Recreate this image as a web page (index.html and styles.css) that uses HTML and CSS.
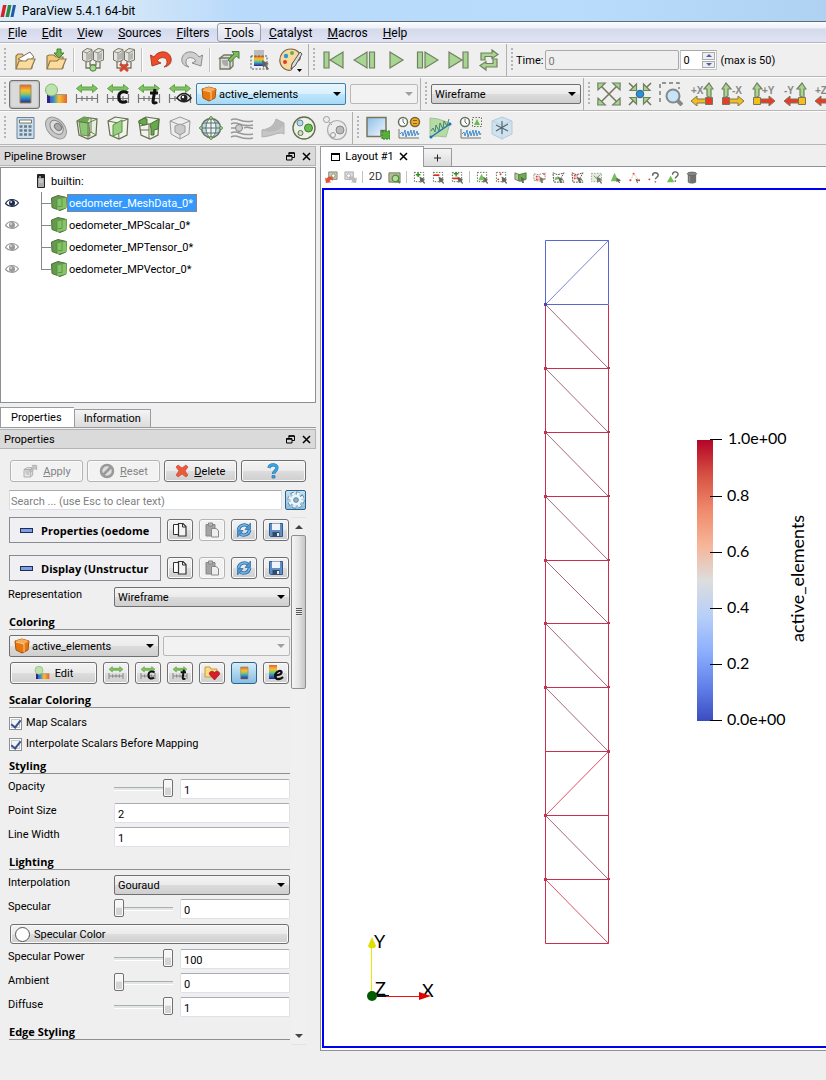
FILE: index.html
```html
<!DOCTYPE html>
<html lang="en">
<head>
<meta charset="utf-8">
<title>ParaView 5.4.1 64-bit</title>
<link rel="stylesheet" href="styles.css">
</head>
<body>
<svg class="defs" width="0" height="0" aria-hidden="true">
  <defs>
    <linearGradient id="rainbow" x1="0" y1="0" x2="0" y2="1"><stop offset="0" stop-color="#e8622a"/><stop offset=".3" stop-color="#f5c030"/><stop offset=".5" stop-color="#8fc860"/><stop offset=".7" stop-color="#2a9ad0"/><stop offset="1" stop-color="#35208a"/></linearGradient>
    <linearGradient id="rainbowh"><stop offset="0" stop-color="#5a3aa0"/><stop offset=".3" stop-color="#2a8ad0"/><stop offset=".6" stop-color="#f5c030"/><stop offset="1" stop-color="#e8622a"/></linearGradient>
    <linearGradient id="coolwarm" x1="0" y1="0" x2="0" y2="1"><stop offset="0" stop-color="#b40426"/><stop offset=".125" stop-color="#d65244"/><stop offset=".25" stop-color="#f08a6c"/><stop offset=".375" stop-color="#f6b599"/><stop offset=".5" stop-color="#dddddd"/><stop offset=".625" stop-color="#b8cff8"/><stop offset=".75" stop-color="#8db0fe"/><stop offset=".875" stop-color="#6282ea"/><stop offset="1" stop-color="#3b4cc0"/></linearGradient>
    <linearGradient id="sky" x1="0" y1="0" x2="1" y2="1"><stop offset="0" stop-color="#8fbfe8"/><stop offset="1" stop-color="#f2f8fd"/></linearGradient>
    <symbol id="i-open" viewBox="0 0 24 24"><path d="M3 20V8l2-2h4l2 2h8v12z" fill="#f8c878" stroke="#8a7a50" stroke-width="1.2"/><path d="M5 11 17 4l4 5-8 6z" fill="#fff" stroke="#77745c"/><path d="m3 21 3-8h7l2-2h7l-4 10z" fill="#fddb9c" stroke="#8a7a50" stroke-width="1.2"/></symbol>
    <symbol id="i-save" viewBox="0 0 24 24"><path d="M3 20V8l2-1h5l2 2h7v11z" fill="#f8c878" stroke="#8a7a50" stroke-width="1.2"/><path d="m3 21 3-8h7l2-2h7l-4 10z" fill="#fddb9c" stroke="#8a7a50" stroke-width="1.2"/><path d="M13 1h4v4h3l-5 5-5-5h3z" fill="#69b94c" stroke="#4f7a3a"/></symbol>
    <symbol id="i-servers" viewBox="0 0 24 24"><g fill="#e4e4e4" stroke="#77775f"><path d="M1.500 3.500 6 .5l5 1V12l-5 2-4.500-2z"/><path d="m12.500 3.500 4.500-3 5.500 1V12L17 14l-4.500-2z"/></g><path d="M2 3.500 6 5l5-3M6 5v8M13 3.500 17 5l5-3M17 5v8" fill="none" stroke="#8d8d7c"/><path d="M7 6v6l3-1V4zM18 6v6l3-1V4z" fill="#b4b4b4"/><path d="M5 14v6h14v-6M9 13v4h6v-4" fill="none" stroke="#77775f" stroke-width="1.300"/></symbol>
    <symbol id="i-connect" viewBox="0 0 24 24"><use href="#i-servers"/><circle cx="12" cy="20" r="3.200" fill="#a5d890" stroke="#4f7a3a"/></symbol>
    <symbol id="i-disconnect" viewBox="0 0 24 24"><use href="#i-servers"/><path d="m8 16 8 7m0-7-8 7" stroke="#d8432e" stroke-width="2.800"/></symbol>
    <symbol id="i-undo" viewBox="0 0 24 24"><path d="M1.500 7 3 18l9-3-4-2c2-4 9-5 10 0 .5 3-1 5-3 6 5-1 8-4 7-9C20 2 9 2 5 9z" fill="#f04a28" stroke="#a84028"/></symbol>
    <symbol id="i-redo" viewBox="0 0 24 24"><path d="M22.500 7 21 18l-9-3 4-2c-2-4-9-5-10 0-.5 3 1 5 3 6-5-1-8-4-7-9C4 2 15 2 19 9z" fill="#cfcfcf" stroke="#8d8d8d"/></symbol>
    <symbol id="i-extract" viewBox="0 0 24 24"><path d="m3 10 4-3h8l-2 3zM3 10h10v11H3zM13 10l3-3v11l-3 3" fill="#ddd" stroke="#77775f" stroke-width="1.300"/><path d="M5 12h6v6c-3 0-6 0-6-6z" fill="#aaa"/><path d="m11 12 6-6-2-2.500h7v7L19.500 8l-6 6z" fill="#79be5b" stroke="#4f7a3a"/></symbol>
    <symbol id="i-pick" viewBox="0 0 24 24"><path d="M6 2h10v6H6z" fill="#bbb"/><path d="M6 8h10v10H6z" fill="url(#rainbow)"/><path d="M3 8h16v13H3z" fill="none" stroke="#555" stroke-dasharray="2 1.500"/><path d="m14 12 7 4-3 1 3 4-2 1-2-4-2 2z" fill="#63635a"/></symbol>
    <symbol id="i-palette" viewBox="0 0 24 24"><path d="M12 1C4 1 0 8 1 14c1 7 8 9 11 8 3-2 0-5 2-7s6-1 7-4C22 5 18 1 12 1z" fill="#f8d9a0" stroke="#77664d" stroke-width="1.200"/><circle cx="7" cy="8" r="2.200" fill="#2a9ad0"/><circle cx="13" cy="5" r="2" fill="#6aae4a"/><circle cx="6" cy="14" r="2" fill="#e03c2a"/><path d="m21 4 2 2-7 12-4 3 1-5z" fill="#ddd" stroke="#555"/><path d="M18 21h5l-2.500 3z" fill="#000"/></symbol>
    <symbol id="i-first" viewBox="0 0 24 24"><path d="M2 4h5v16H2zM21 4v16L8 12z" class="g"/></symbol>
    <symbol id="i-prev" viewBox="0 0 24 24"><path d="M14 4v16L1 12zM16.500 4h5v16h-5z" class="g"/></symbol>
    <symbol id="i-play" viewBox="0 0 24 24"><path d="M6 4v16l13-8z" class="g"/></symbol>
    <symbol id="i-next" viewBox="0 0 24 24"><path d="M10 4v16l13-8zM2.500 4h5v16h-5z" class="g"/></symbol>
    <symbol id="i-last" viewBox="0 0 24 24"><path d="M3 4v16l13-8zM17 4h5v16h-5z" class="g"/></symbol>
    <symbol id="i-loop" viewBox="0 0 24 24"><path d="M4 12V5h11V2l6 4.500-6 4V8.500H8V12zM20 11v8H9v3l-6-4.500 6-4v2h7V11z" class="g"/></symbol>
    <symbol id="i-bar" viewBox="0 0 24 24"><path d="M7 3h11v18H7z" fill="url(#rainbow)" stroke="#a08a60"/></symbol>
    <symbol id="i-edit" viewBox="0 0 24 24"><path d="M3 13h20v8H3z" fill="url(#rainbowh)"/><path d="M9 13h14v-1H9z" fill="#999"/><path d="M3 11h3v10H3z" fill="#35208a"/><circle cx="7.500" cy="8" r="6" fill="#bde3ad" stroke="#87b475"/></symbol>
    <symbol id="i-range" viewBox="0 0 24 24"><path d="m1.500 6.500 5-4v2.500h11V2.500l5 4-5 4V8h-11v2.500z" fill="#7cc45e" stroke="#65a04c"/><path d="M1.500 12v9M22.500 12v9M1.500 16.500h21M7 14v5m5-5v5m5-5v5" fill="none" stroke="#777" stroke-width="1.200"/></symbol>
    <symbol id="i-rangec" viewBox="0 0 24 24"><use href="#i-range"/><path d="M22 11c-6-3-10 0-9 5 0 5 5 5 8 3" fill="none" stroke="#111" stroke-width="3"/></symbol>
    <symbol id="i-ranget" viewBox="0 0 24 24"><use href="#i-range"/><path d="m18 7-2 12c0 3 3 2 4 1M13 11h8" fill="none" stroke="#111" stroke-width="3"/></symbol>
    <symbol id="i-rangeeye" viewBox="0 0 24 24"><use href="#i-range"/><path d="M9 16c4-6 10-6 14 0-4 5-10 5-14 0z" fill="#eee" stroke="#222" stroke-width="1.500"/><circle cx="16" cy="16" r="3.500" fill="#222"/><circle cx="15" cy="15" r="1.200" fill="#fff"/></symbol>
    <symbol id="i-orange" viewBox="0 0 16 16"><path d="M1 3 8 1l7 2-1 9-6 3-6-3z" fill="#e8760f" stroke="#a8530c"/><path d="M1 3 8 1l7 2-5 3z" fill="#f8ab58"/><path d="m2 4 8 2v8" fill="none" stroke="#fbcf9b"/></symbol>
    <symbol id="i-axes" viewBox="0 0 24 24"><path d="m4 4 16 16M20 4 4 20" stroke="#77775f" stroke-width="1.600"/><path d="M.8 1h7.500L1 8zM23.200 1h-7.500L23 8zM.8 23h7.500L1 16zM23.200 23h-7.500L23 16z" class="g"/></symbol>
    <symbol id="i-center" viewBox="0 0 24 24"><path d="m1 1 5 5m17-5-5 5M1 23l5-5m17 5-5-5" stroke="#77775f" stroke-width="1.600"/><path d="M8.500 2v6.500H2zM15.500 2v6.500H22zM8.500 22v-6.500H2zM15.500 22v-6.500H22z" class="g"/><circle cx="12" cy="12" r="3.800" fill="#1d95d8" stroke="#3c6078"/></symbol>
    <symbol id="i-zoombox" viewBox="0 0 24 24"><path d="M1 20V1h19v6" fill="none" stroke="#777" stroke-width="1.400" stroke-dasharray="4 3"/><path d="m18 18 5 5" stroke="#888" stroke-width="4"/><circle cx="14" cy="14" r="6.500" fill="#c5e5f8" stroke="#888" stroke-width="2"/></symbol>
    <symbol id="i-camup-r" viewBox="0 0 24 24"><path d="M17 14V7h-3l5-6 4 6h-2v9z" class="g"/><path d="M1 19l6-5v3h9v4H7v3z" fill="#f6bd18" stroke="#77775f"/><path d="M15.500 15.500h7v7h-7z" fill="#e83c28" stroke="#77775f"/></symbol>
    <symbol id="i-camup-l" viewBox="0 0 24 24"><path d="M7 14V7h3L5 1 1 7h2v9z" class="g"/><path d="m23 19-6-5v3H8v4h9v3z" fill="#f6bd18" stroke="#77775f"/><path d="M1.500 15.500h7v7h-7z" fill="#e83c28" stroke="#77775f"/></symbol>
    <symbol id="i-camy-l" viewBox="0 0 24 24"><path d="M7 14V7h3L5 1 1 7h2v9z" class="g"/><path d="m23 19-6-5v3H8v4h9v3z" fill="#e83c28" stroke="#77775f"/><path d="M1.500 15.500h7v7h-7z" fill="#f6bd18" stroke="#77775f"/></symbol>
    <symbol id="i-camy-r" viewBox="0 0 24 24"><path d="M17 14V7h-3l5-6 4 6h-2v9z" class="g"/><path d="M1 19l6-5v3h9v4H7v3z" fill="#e83c28" stroke="#77775f"/><path d="M15.500 15.500h7v7h-7z" fill="#f6bd18" stroke="#77775f"/></symbol>
    <symbol id="i-calc" viewBox="0 0 24 24"><path d="M4 1.500h17v21H4z" fill="#c9e0f2" stroke="#6d8396"/><path d="M6.500 4h12v3h-12z" fill="#fff" stroke="#77775f"/><path d="M6.500 10.500h12M6.500 14.500h12M6.500 18.500h12" stroke="#6d7a85" stroke-width="2.600" stroke-dasharray="3 1.500"/></symbol>
    <symbol id="i-contour" viewBox="0 0 24 24"><ellipse cx="12" cy="12" rx="12.500" ry="8.500" transform="rotate(48 12 12)" fill="#c8c8c8" stroke="#999"/><ellipse cx="13" cy="11.500" rx="8" ry="5.500" transform="rotate(48 13 11)" fill="#ddd" stroke="#888"/><ellipse cx="14" cy="11" rx="4" ry="3" transform="rotate(48 14 11)" fill="#aaa" stroke="#777"/></symbol>
    <symbol id="i-clip" viewBox="0 0 24 24"><path d="M2 5 9 1l13 2-1 16-8 4-9-4z" fill="#e4efdc" stroke="#66704f" stroke-width="1.200"/><path d="m4 6 10 1 1 13-9-1z" fill="#8cc873" stroke="#66704f" stroke-width=".8"/><path d="m2 5 7-4 6 1-3 5z" fill="#6aa850"/><path d="m2 5 11 2 9-4M13 7v16M16 2v14l5 3m-5-3-3 3" fill="none" stroke="#66704f" stroke-width=".9"/></symbol>
    <symbol id="i-slice" viewBox="0 0 24 24"><path d="M2 5 9 1l13 2-1 16-8 4-9-4z" fill="#f0f2ec" stroke="#66704f" stroke-width="1.200"/><path d="m2 5 10 2 10-4M12 7l1 16" fill="none" stroke="#66704f"/><path d="m7 9 9-5v12l-9 4z" fill="#97cf80" stroke="#5a9040"/></symbol>
    <symbol id="i-thresh" viewBox="0 0 24 24"><path d="M2 5 9 1l13 2-1 16-8 4-9-4z" fill="#f0f2ec" stroke="#66704f" stroke-width="1.200"/><path d="M3 14h9m0-7v16M3 10l9-2" stroke="#66704f"/><path d="m2 5 5-3 3 1v5l-3 1-5-2zM13 8l9-5-1 10-4 1v5h-3v-6z" fill="#66a94b" stroke="#4d7038"/></symbol>
    <symbol id="i-cubegray" viewBox="0 0 24 24"><path d="m2 5 10-4 10 4-1 13-9 5-9-5zM2 5l10 4 10-4M12 9v14" fill="#ececec" stroke="#999"/><path d="m7 10 5-2 5 2v6l-5 3-5-3z" fill="#c9c9c9" stroke="#999"/></symbol>
    <symbol id="i-glyph" viewBox="0 0 24 24"><circle cx="12" cy="12" r="9.500" fill="#b7d9ee" stroke="#66705f" stroke-width="1.500"/><ellipse cx="12" cy="12" rx="5" ry="9.500" fill="#e8f4fa" stroke="#66705f"/><path d="M2 12h20M4 7h16M4 17h16M12 2v20" stroke="#66705f"/><path d="m12 0 2 2-2 2-2-2zM12 20l2 2-2 2-2-2zM2 10l2 2-2 2-2-2zM22 10l2 2-2 2-2-2z" fill="#8cc873" stroke="#4d7038" stroke-width=".6"/></symbol>
    <symbol id="i-stream" viewBox="0 0 24 24"><path d="M1 4c7-4 9 4 22 1M1 8c7-4 9 4 22 1M1 17c7-4 9 4 22 1M1 21c7-4 9 4 22 1M1 12h5m8 0c4-2 6 1 9 0" fill="none" stroke="#999" stroke-width="1.500"/><circle cx="9" cy="12" r="3.500" fill="#ccc" stroke="#888"/></symbol>
    <symbol id="i-warp" viewBox="0 0 24 24"><path d="M1 14c7-1 12-4 14-11l8 4v11c-5-3-10 2-22 3z" fill="#c6c6c6" stroke="#b0b0b0"/><path d="M1 14c7-1 12-4 14-11l8 4c-3 7-8 8-15 9z" fill="#bababa"/></symbol>
    <symbol id="i-group" viewBox="0 0 24 24"><circle cx="12" cy="12" r="11" fill="#edf3e8" stroke="#66704f" stroke-width="1.400"/><circle cx="8" cy="7" r="3" fill="#b9daf0" stroke="#6d8396"/><circle cx="16.500" cy="12" r="4" fill="#68bd4a" stroke="#4d7038"/><circle cx="8.500" cy="17" r="2.500" fill="#cce4c0" stroke="#66704f"/></symbol>
    <symbol id="i-level" viewBox="0 0 24 24"><circle cx="14" cy="14" r="9.500" fill="#ececec" stroke="#aaa" stroke-width="1.200"/><circle cx="3.500" cy="3.500" r="3" fill="#eee" stroke="#999"/><circle cx="17" cy="14" r="4" fill="#bbb" stroke="#888"/><circle cx="10" cy="19" r="2.500" fill="#eee" stroke="#999"/><path d="m6 6 3 3" stroke="#aaa"/></symbol>
    <symbol id="i-extsel" viewBox="0 0 24 24"><path d="M1 1.500h19v13h-5v6H1z" fill="url(#sky)" stroke="#77775f" stroke-width="1.500"/><path d="M16 15h8v8h-8z" fill="#56b03a" stroke="#2d7a1c" stroke-dasharray="2 1"/></symbol>
    <symbol id="i-wave" viewBox="0 0 24 24"><path d="M2 13v9h20" fill="none" stroke="#77775f"/><path d="m3 18 2-2 1 4 2-6 1 7 2-6 1 5 2-6 1 6 2-6 1 6 2-5 1 4 1-2" fill="none" stroke="#4a90cc"/></symbol>
    <symbol id="i-time1" viewBox="0 0 24 24"><use href="#i-wave"/><circle cx="6" cy="6" r="4.500" fill="#fff" stroke="#66705f" stroke-width="1.500"/><path d="M6 3v3l2 2" fill="none" stroke="#66705f"/><circle cx="18" cy="6" r="4.500" fill="#f3ae18" stroke="#77663d" stroke-width="1.500"/><path d="M16 4.500h4m-4 3h4" stroke="#77663d"/></symbol>
    <symbol id="i-line" viewBox="0 0 24 24"><path d="m2 2 8 1 12 4-4 14-9-1-7 1z" fill="#b7dba7" stroke="#9dc48b"/><path d="M3 21 22 8" stroke="#1d70b8" stroke-width="1.500"/><path d="m3 15 2-3 2 4 1-7 3 6 1-8 3 6 1-8 3 5 2-7" fill="none" stroke="#44806f"/><circle cx="3" cy="21" r="1.500" fill="#1d70b8"/><circle cx="22" cy="8" r="1.500" fill="#1d70b8"/></symbol>
    <symbol id="i-time2" viewBox="0 0 24 24"><use href="#i-wave"/><circle cx="6" cy="6" r="4.500" fill="#fff" stroke="#66705f" stroke-width="1.500"/><path d="M6 3v3l2 2" fill="none" stroke="#66705f"/><path d="M13.500 1.500h9v9h-9z" fill="none" stroke="#66704f" stroke-dasharray="1.500 1.500"/><path d="m18 3 3 6h-6z" fill="#68bd4a"/></symbol>
    <symbol id="i-prog" viewBox="0 0 24 24"><path d="m2 5 10-4 10 4v13l-10 5-10-5z" fill="#cfe2f0" stroke="#b4cad9"/><path d="m2 5 10 4 10-4M12 9v14" fill="none" stroke="#bdd2e0"/><path d="M12 5v13M6 9l12 6M18 8 6 15" stroke="#55656f" stroke-width="1.200"/></symbol>
    <symbol id="i-cube" viewBox="0 0 16 16"><path d="M.5 3 7 .5l8.500 2L15 13l-6 2.500-8-3z" fill="#649a4d" stroke="#4f6f3c"/><path d="M6 4.500 15.500 2.500 15 13l-9 2z" fill="#83c466"/><path d="M6 4.500V14M11 3.500v8H7" fill="none" stroke="#5a8a44" stroke-width=".8"/></symbol>
    <symbol id="i-eye" viewBox="0 0 14 10"><path d="M.5 5.500C3 .5 10 0 13.500 5 10 9.500 4 9.500.5 5.500z" fill="#fff" stroke="currentColor" stroke-width="1.200"/><circle cx="7" cy="5" r="3" fill="currentColor"/><circle cx="6.200" cy="4" r="1" fill="#ddd"/></symbol>
    <symbol id="i-server" viewBox="0 0 10 16"><path d="M1.500 1.500h7v13h-7z" fill="#aaa" stroke="#222"/><path d="M2 2h6v3H2z" fill="#222"/><path d="M3 4h2" stroke="#fff"/><path d="M3 7h4M3 9h4" stroke="#ddd"/></symbol>
    <symbol id="i-float" viewBox="0 0 9 9"><path d="M3 1h5.500v4.500H6M3 1v2M.5 3.500H6v4.500H.5z" fill="none" stroke="#000"/><path d="M2.500 1h6M.5 4H6" stroke="#000" stroke-width="1.600"/></symbol>
    <symbol id="i-x" viewBox="0 0 9 9"><path d="m1 1 7 7M8 1 1 8" stroke="#000" stroke-width="1.500"/></symbol>
    <symbol id="i-no" viewBox="0 0 16 16"><circle cx="8" cy="8" r="6" fill="#ddd" stroke="#999" stroke-width="2.500"/><path d="m4 12 8-8" stroke="#999" stroke-width="2.500"/></symbol>
    <symbol id="i-del" viewBox="0 0 14 14"><path d="m1 3 2-2 4 3 4-3 2 2-3 4 3 4-2 2-4-3-4 3-2-2 3-4z" fill="#f0583a" stroke="#b8503c" stroke-width=".7"/></symbol>
    <symbol id="i-q" viewBox="0 0 12 16"><path d="M2 5C2.500 1 10 1 10 4.500 10 8 6.500 8 6.500 11" fill="none" stroke="#2f6e9e" stroke-width="3.200"/><path d="M2 5C2.500 1 10 1 10 4.500 10 8 6.500 8 6.500 11" fill="none" stroke="#35a5e8" stroke-width="2.200"/><path d="M5 12.500h3V15H5z" fill="#35a5e8" stroke="#2f6e9e" stroke-width=".7"/></symbol>
    <symbol id="i-gear" viewBox="0 0 18 18"><circle cx="9" cy="9" r="6.800" fill="none" stroke="#5a7b92" stroke-width="3.500" stroke-dasharray="3 2.340"/><circle cx="9" cy="9" r="6.300" fill="none" stroke="#eef6fb" stroke-width="3" stroke-dasharray="2.600 2.350"/><circle cx="9" cy="9" r="4" fill="#a9cbe0" stroke="#eef6fb" stroke-width="2.600"/><circle cx="9" cy="9" r="2.300" fill="#8db5d0" stroke="#5a7b92" stroke-width=".8"/></symbol>
    <symbol id="i-copy" viewBox="0 0 16 16"><path d="M1.500 2.500H6l2 2v8H1.500z" fill="#fff" stroke="#333"/><path d="M6.500 1.500H11L14 4.500v9.500H6.500z" fill="#f4f4f4" stroke="#333" stroke-width="1.200"/><path d="M10.500 1.500v3.500H14" fill="none" stroke="#333"/></symbol>
    <symbol id="i-paste" viewBox="0 0 16 16"><path d="M2 2.500h9V14H2z" fill="#a4a4a4" stroke="#888"/><path d="M4.500 1h4v3h-4z" fill="#bbb" stroke="#888"/><path d="M7.500 6.500H12l2.500 2V15h-7z" fill="#eee" stroke="#888"/></symbol>
    <symbol id="i-reload" viewBox="0 0 16 16"><path d="M2.500 8C3 3 9 1.500 12 4.500M13.500 8C13 13 7 14.500 4 11.500" fill="none" stroke="#2769a8" stroke-width="3.400"/><path d="M2.500 8C3 3 9 1.500 12 4.500M13.500 8C13 13 7 14.500 4 11.500" fill="none" stroke="#6fb2e4" stroke-width="1.800"/><path d="M14.500 1v6.500H9zM1.500 15V8.500H7z" fill="#4d97d3" stroke="#2769a8" stroke-width=".7"/></symbol>
    <symbol id="i-disk" viewBox="0 0 16 16"><path d="M1.500 1.500h13v13h-12l-1-1z" fill="#5d8fc7" stroke="#36598a"/><path d="M4 1.500h8V8H4z" fill="#eef4fa"/><path d="M4.500 10h7v4.500h-7z" fill="#334a66"/><path d="M9 11h2v3H9z" fill="#e8e8e8"/></symbol>
    <symbol id="i-fav" viewBox="0 0 16 16"><path d="M1 2h5l1 2h6v8H1z" fill="#fbdc84" stroke="#c49b3c"/><path d="m10.500 15-5-5.500c-1-3 3-4.500 5-2 2-2.500 6-1 5 2z" fill="#d81e2c" stroke="#8b1018" stroke-width=".6"/></symbol>
    <symbol id="i-bare" viewBox="0 0 16 16"><path d="M1 0h8v14H1z" fill="url(#rainbow)"/><path d="M6 10c9 1 9-5 5-4-5 2-5 9 0 8 2 0 3-1 4-2" fill="none" stroke="#111" stroke-width="2.300"/></symbol>
    <symbol id="m-cam" viewBox="0 0 14 14"><path d="M4 1h9v8H4z" fill="#c8c8b8" stroke="#88886f"/><circle cx="9" cy="5" r="2" fill="#fff" stroke="#88886f"/><path d="m0 7 1 6 6-1-2-1c1-2 3-2 3 0 3-5-4-7-6-3z" fill="#e0563a"/></symbol>
    <symbol id="m-camr" viewBox="0 0 14 14"><path d="M1 1h9v8H1z" fill="#ddd" stroke="#aaa"/><circle cx="5" cy="5" r="2" fill="#fff" stroke="#aaa"/><path d="m14 7-1 6-6-1 2-1c-1-2-3-2-3 0-3-5 4-7 6-3z" fill="#bbb"/></symbol>
    <symbol id="m-cap" viewBox="0 0 14 14"><path d="M1 2h12v10H1z" fill="#b5bb9e" stroke="#77775f"/><circle cx="8" cy="8" r="3.500" fill="#b2dc9e" stroke="#55903c" stroke-width="1.400"/><path d="m10 10 3 3" stroke="#55903c" stroke-width="2"/></symbol>
    <symbol id="m-box" viewBox="0 0 14 14"><path d="M1.500 1.500h10v10h-10z" fill="none" stroke="#55554d" stroke-dasharray="1.500 1.500"/><path d="m7 6 6 3-2 1 2 3-1 1-2-3-2 2z" fill="#66665a"/></symbol>
    <symbol id="m-add" viewBox="0 0 14 14"><use href="#m-box"/><path d="M3 4h5M5.500 1.500v5" stroke="#2d8f20" stroke-width="1.600"/></symbol>
    <symbol id="m-sub" viewBox="0 0 14 14"><use href="#m-box"/><path d="M2 4.500h6" stroke="#e02818" stroke-width="1.800"/></symbol>
    <symbol id="m-tog" viewBox="0 0 14 14"><use href="#m-box"/><path d="M3 3h5M5.500 1v5" stroke="#2d8f20" stroke-width="1.500"/><path d="M2 8h6" stroke="#e02818" stroke-width="1.800"/></symbol>
    <symbol id="m-cells" viewBox="0 0 14 14"><use href="#m-box"/><path d="m6 3 3.500 7h-7z" fill="#79bf60"/></symbol>
    <symbol id="m-pts" viewBox="0 0 14 14"><use href="#m-box"/><path d="M6 3.500h.1M3.500 9h.1" stroke="#e83a28" stroke-width="2" stroke-linecap="round"/></symbol>
    <symbol id="m-fr" viewBox="0 0 14 14"><path d="m1 2 5 2v7l-5-2z" fill="#b5c8a8" stroke="#77775f"/><path d="m5 4 8-2v7l-6 2-2-1z" fill="#66b34c" stroke="#55783f"/><path d="m7 6 5 3-2 1 1 3H9l-1-2z" fill="#66665a"/></symbol>
    <symbol id="m-frp" viewBox="0 0 14 14"><path d="m1 3 5 1 7-2v7l-5 2-7-1z" fill="none" stroke="#88887a" stroke-dasharray="2 1"/><path d="M3 6h4M3 9h4M12 3v1m0 4v1" stroke="#e83a28" stroke-width="2" stroke-dasharray="2 1"/><path d="m7 6 5 3-2 1 1 3H9l-1-2z" fill="#77776a"/></symbol>
    <symbol id="m-poly" viewBox="0 0 14 14"><path d="m1 2 5 2 7-2-3 5 3 5H2z" fill="none" stroke="#44443c" stroke-dasharray="2 1"/><path d="m3 7 4-1v3l-4 1z" fill="#79bf60"/><path d="m6 6 6 3-2 1 1 3H9l-1-2z" fill="#66665a"/></symbol>
    <symbol id="m-polyp" viewBox="0 0 14 14"><path d="m1 2 5 2 7-2-3 5 3 5H2z" fill="none" stroke="#44443c" stroke-dasharray="2 1"/><path d="M3 5h4M3 8h4" stroke="#e83a28" stroke-width="1.800" stroke-dasharray="2 1"/><path d="m6 6 6 3-2 1 1 3H9l-1-2z" fill="#66665a"/></symbol>
    <symbol id="m-blk" viewBox="0 0 14 14"><path d="M1.500 2.500h11v9h-11z" fill="#e4ece0" stroke="#999" stroke-dasharray="1.500 1.500"/><path d="m4 5 3 3 4-4" stroke="#689a55" fill="none"/><path d="m7 6 6 3-2 1 2 3-1 1-2-3-2 2z" fill="#77776a"/></symbol>
    <symbol id="m-icell" viewBox="0 0 14 14"><path d="m6 2 4 9H2z" fill="#74bd59"/><path d="m8 7 5 3-2 1 1 2h-1l-2-2-1 1z" fill="#66665a"/></symbol>
    <symbol id="m-ipt" viewBox="0 0 14 14"><path d="M6 3h.1M2.500 10h.1M12 10h.1" stroke="#e83a28" stroke-width="2" stroke-linecap="round"/><path d="m6 3-3 7M6 3l5 6" stroke="#e8a090" stroke-dasharray="1 1"/><path d="m8 8 4 2-2 1 1 2h-1l-1-2z" fill="#66665a"/></symbol>
    <symbol id="m-qp" viewBox="0 0 14 14"><path d="M2.500 9h.1" stroke="#e83a28" stroke-width="2" stroke-linecap="round"/><path d="M6 5c0-4 6-4 6-.5C12 7 9 7 9 9M9 11v1.500" fill="none" stroke="#66665a" stroke-width="1.600"/></symbol>
    <symbol id="m-qc" viewBox="0 0 14 14"><path d="m5 5 4 7H1z" fill="#74bd59"/><path d="M7 4c0-4 6-4 6-.5C13 6 10 6 10 8M10 10v1.500" fill="none" stroke="#66665a" stroke-width="1.500"/></symbol>
    <symbol id="m-trash" viewBox="0 0 14 14"><path d="M3 4h9v8c-2 2-7 2-9 0z" fill="#707070"/><path d="M5 5v7" stroke="#999"/><ellipse cx="7.500" cy="3" rx="5" ry="1.800" fill="#8a8a8a" stroke="#666"/></symbol>
  </defs>
</svg>

<header class="titlebar">
  <svg class="logo" viewBox="0 0 16 12" aria-hidden="true"><path d="M3 0h3.500L4 12H.5z" fill="#d6202c"/><path d="M8 0h3.500L9 12H5.500z" fill="#2a8a3e"/><path d="M13 0h3l-2.500 12h-3z" fill="#2458a8"/></svg>
  <h1 class="title">ParaView 5.4.1 64-bit</h1>
</header>

<nav class="menubar">
  <button class="menu"><u>F</u>ile</button><button class="menu"><u>E</u>dit</button><button class="menu"><u>V</u>iew</button><button class="menu"><u>S</u>ources</button><button class="menu"><u>F</u>ilters</button><button class="menu menu-hot"><u>T</u>ools</button><button class="menu"><u>C</u>atalyst</button><button class="menu"><u>M</u>acros</button><button class="menu"><u>H</u>elp</button>
</nav>

<div class="toolrow">
  <div class="toolbar">
    <button class="tool" aria-label="Open"><svg><use href="#i-open"/></svg></button>
    <button class="tool" aria-label="Save data"><svg><use href="#i-save"/></svg></button>
    <i class="sep"></i>
    <button class="tool" aria-label="Connect"><svg><use href="#i-connect"/></svg></button>
    <button class="tool" aria-label="Disconnect"><svg><use href="#i-disconnect"/></svg></button>
    <i class="sep"></i>
    <button class="tool" aria-label="Undo"><svg><use href="#i-undo"/></svg></button>
    <button class="tool" aria-label="Redo"><svg><use href="#i-redo"/></svg></button>
    <i class="sep"></i>
    <button class="tool" aria-label="Auto apply"><svg><use href="#i-extract"/></svg></button>
    <button class="tool" aria-label="Find data"><svg><use href="#i-pick"/></svg></button>
    <button class="tool" aria-label="Color palette"><svg><use href="#i-palette"/></svg></button>
  </div>
  <div class="toolbar">
    <button class="tool" aria-label="First frame"><svg><use href="#i-first"/></svg></button>
    <button class="tool" aria-label="Previous frame"><svg><use href="#i-prev"/></svg></button>
    <button class="tool" aria-label="Play"><svg><use href="#i-play"/></svg></button>
    <button class="tool" aria-label="Next frame"><svg><use href="#i-next"/></svg></button>
    <button class="tool" aria-label="Last frame"><svg><use href="#i-last"/></svg></button>
    <button class="tool" aria-label="Loop"><svg><use href="#i-loop"/></svg></button>
  </div>
  <div class="toolbar toolbar-last">
    <label class="time-label" for="time">Time:</label>
    <input class="time-input" id="time" value="0" disabled>
    <span class="spin">
      <input class="spin-input" value="0" aria-label="Time step">
      <span class="spin-buttons"><button class="step step-up" aria-label="Increase"></button><button class="step step-down" aria-label="Decrease"></button></span>
    </span>
    <span class="max">(max is 50)</span>
  </div>
</div>

<div class="toolrow">
  <div class="toolbar">
    <button class="tool tool-on" aria-label="Show color legend"><svg><use href="#i-bar"/></svg></button>
    <button class="tool" aria-label="Edit color map"><svg><use href="#i-edit"/></svg></button>
    <button class="tool" aria-label="Rescale to data range"><svg><use href="#i-range"/></svg></button>
    <button class="tool" aria-label="Rescale to custom range"><svg><use href="#i-rangec"/></svg></button>
    <button class="tool" aria-label="Rescale over time"><svg><use href="#i-ranget"/></svg></button>
    <button class="tool" aria-label="Rescale to visible range"><svg><use href="#i-rangeeye"/></svg></button>
    <label class="combo combo-hot combo-array"><svg class="combo-icon"><use href="#i-orange"/></svg><select aria-label="Color by"><option>active_elements</option></select></label>
    <label class="combo combo-off combo-comp"><select aria-label="Component" disabled><option></option></select></label>
  </div>
  <div class="toolbar">
    <label class="combo combo-rep"><select aria-label="Representation"><option>Wireframe</option></select></label>
  </div>
  <div class="toolbar toolbar-last">
    <button class="tool" aria-label="Reset camera"><svg><use href="#i-axes"/></svg></button>
    <button class="tool" aria-label="Zoom to data"><svg><use href="#i-center"/></svg></button>
    <button class="tool" aria-label="Zoom to box"><svg><use href="#i-zoombox"/></svg></button>
    <button class="tool" aria-label="View +X"><svg viewBox="0 0 24 24"><use href="#i-camup-r"/><text class="cam" x="1" y="12">+X</text></svg></button>
    <button class="tool" aria-label="View -X"><svg viewBox="0 0 24 24"><use href="#i-camup-l"/><text class="cam" x="11" y="12">-X</text></svg></button>
    <button class="tool" aria-label="View +Y"><svg viewBox="0 0 24 24"><use href="#i-camy-l"/><text class="cam" x="10" y="12">+Y</text></svg></button>
    <button class="tool" aria-label="View -Y"><svg viewBox="0 0 24 24"><use href="#i-camy-r"/><text class="cam" x="1" y="12">-Y</text></svg></button>
    <button class="tool" aria-label="View +Z"><svg viewBox="0 0 24 24"><use href="#i-camy-r"/><text class="cam" x="1" y="12">+Z</text></svg></button>
  </div>
</div>

<div class="toolrow">
  <div class="toolbar">
    <button class="tool" aria-label="Calculator"><svg><use href="#i-calc"/></svg></button>
    <button class="tool" aria-label="Contour"><svg><use href="#i-contour"/></svg></button>
    <button class="tool" aria-label="Clip"><svg><use href="#i-clip"/></svg></button>
    <button class="tool" aria-label="Slice"><svg><use href="#i-slice"/></svg></button>
    <button class="tool" aria-label="Threshold"><svg><use href="#i-thresh"/></svg></button>
    <button class="tool" aria-label="Extract subset"><svg><use href="#i-cubegray"/></svg></button>
    <button class="tool" aria-label="Glyph"><svg><use href="#i-glyph"/></svg></button>
    <button class="tool" aria-label="Stream tracer"><svg><use href="#i-stream"/></svg></button>
    <button class="tool" aria-label="Warp by vector"><svg><use href="#i-warp"/></svg></button>
    <button class="tool" aria-label="Group datasets"><svg><use href="#i-group"/></svg></button>
    <button class="tool" aria-label="Extract level"><svg><use href="#i-level"/></svg></button>
  </div>
  <div class="toolbar toolbar-last">
    <button class="tool" aria-label="Extract selection"><svg><use href="#i-extsel"/></svg></button>
    <button class="tool" aria-label="Plot global variables"><svg><use href="#i-time1"/></svg></button>
    <button class="tool" aria-label="Plot over line"><svg><use href="#i-line"/></svg></button>
    <button class="tool" aria-label="Plot selection over time"><svg><use href="#i-time2"/></svg></button>
    <button class="tool" aria-label="Programmable filter"><svg><use href="#i-prog"/></svg></button>
  </div>
</div>

<main class="main">
  <aside class="docks">
    <section class="dock">
      <header class="dock-title"><h2>Pipeline Browser</h2><button class="dock-btn" aria-label="Float"><svg><use href="#i-float"/></svg></button><button class="dock-btn" aria-label="Close"><svg><use href="#i-x"/></svg></button></header>
      <ul class="tree">
        <li class="node node-root"><svg class="server"><use href="#i-server"/></svg><span class="node-name">builtin:</span></li>
        <li class="node"><svg class="eye eye-on"><use href="#i-eye"/></svg><i class="branch"></i><svg class="cube"><use href="#i-cube"/></svg><span class="node-name node-sel">oedometer_MeshData_0*</span></li>
        <li class="node"><svg class="eye"><use href="#i-eye"/></svg><i class="branch"></i><svg class="cube"><use href="#i-cube"/></svg><span class="node-name">oedometer_MPScalar_0*</span></li>
        <li class="node"><svg class="eye"><use href="#i-eye"/></svg><i class="branch"></i><svg class="cube"><use href="#i-cube"/></svg><span class="node-name">oedometer_MPTensor_0*</span></li>
        <li class="node"><svg class="eye"><use href="#i-eye"/></svg><i class="branch branch-end"></i><svg class="cube"><use href="#i-cube"/></svg><span class="node-name">oedometer_MPVector_0*</span></li>
      </ul>
    </section>

    <div class="tabs"><button class="tab tab-on">Properties</button><button class="tab">Information</button></div>

    <section class="dock">
      <header class="dock-title"><h2>Properties</h2><button class="dock-btn" aria-label="Float"><svg><use href="#i-float"/></svg></button><button class="dock-btn" aria-label="Close"><svg><use href="#i-x"/></svg></button></header>
      <div class="actions">
        <button class="btn" disabled><svg class="ic16 faded"><use href="#i-extract"/></svg><span><u>A</u>pply</span></button>
        <button class="btn" disabled><svg class="ic16"><use href="#i-no"/></svg><span><u>R</u>eset</span></button>
        <button class="btn"><svg class="ic14"><use href="#i-del"/></svg><span><u>D</u>elete</span></button>
        <button class="btn btn-help" aria-label="Help"><svg class="ic16"><use href="#i-q"/></svg></button>
      </div>
      <div class="search"><input placeholder="Search ... (use Esc to clear text)" aria-label="Search properties"><button class="gear" aria-label="Advanced properties"><svg><use href="#i-gear"/></svg></button></div>

      <div class="scroll">
        <div class="props">
          <div class="group">
            <button class="group-name"><i class="minus"></i><span>Properties (oedome</span></button>
            <button class="mini" aria-label="Copy"><svg><use href="#i-copy"/></svg></button><button class="mini" aria-label="Paste" disabled><svg><use href="#i-paste"/></svg></button><button class="mini" aria-label="Reload"><svg><use href="#i-reload"/></svg></button><button class="mini" aria-label="Save"><svg><use href="#i-disk"/></svg></button>
          </div>
          <div class="group">
            <button class="group-name"><i class="minus"></i><span>Display (Unstructur</span></button>
            <button class="mini" aria-label="Copy"><svg><use href="#i-copy"/></svg></button><button class="mini" aria-label="Paste" disabled><svg><use href="#i-paste"/></svg></button><button class="mini" aria-label="Reload"><svg><use href="#i-reload"/></svg></button><button class="mini" aria-label="Save"><svg><use href="#i-disk"/></svg></button>
          </div>
          <div class="field"><label for="rep">Representation</label><span class="combo"><select id="rep"><option>Wireframe</option></select></span></div>

          <h3>Coloring</h3>
          <div class="pair"><label class="combo combo-color"><svg class="combo-icon"><use href="#i-orange"/></svg><select aria-label="Color array"><option>active_elements</option></select></label><label class="combo combo-off"><select aria-label="Color component" disabled><option></option></select></label></div>
          <div class="minis">
            <button class="btn btn-edit"><svg class="ic16"><use href="#i-edit"/></svg><span>Edit</span></button>
            <button class="mini" aria-label="Rescale"><svg><use href="#i-range"/></svg></button><button class="mini" aria-label="Custom range"><svg><use href="#i-rangec"/></svg></button><button class="mini" aria-label="Range over time"><svg><use href="#i-ranget"/></svg></button><button class="mini" aria-label="Choose preset"><svg><use href="#i-fav"/></svg></button><button class="mini mini-on" aria-label="Show legend"><svg><use href="#i-bar"/></svg></button><button class="mini" aria-label="Edit legend"><svg><use href="#i-bare"/></svg></button>
          </div>

          <h3>Scalar Coloring</h3>
          <label class="check"><input type="checkbox" checked>Map Scalars</label>
          <label class="check"><input type="checkbox" checked>Interpolate Scalars Before Mapping</label>

          <h3>Styling</h3>
          <div class="field"><label for="opacity">Opacity</label><input type="range" value="100" aria-label="Opacity slider"><input class="num" id="opacity" value="1"></div>
          <div class="field"><label for="psize">Point Size</label><input class="num" id="psize" value="2"></div>
          <div class="field"><label for="lwidth">Line Width</label><input class="num" id="lwidth" value="1"></div>

          <h3>Lighting</h3>
          <div class="field"><label for="interp">Interpolation</label><span class="combo"><select id="interp"><option>Gouraud</option></select></span></div>
          <div class="field"><label for="spec">Specular</label><input type="range" value="0" aria-label="Specular slider"><input class="num" id="spec" value="0"></div>
          <button class="btn btn-color"><i class="swatch"></i><span>Specular Color</span></button>
          <div class="field"><label for="power">Specular Power</label><input type="range" value="100" aria-label="Specular power slider"><input class="num" id="power" value="100"></div>
          <div class="field"><label for="ambient">Ambient</label><input type="range" value="0" aria-label="Ambient slider"><input class="num" id="ambient" value="0"></div>
          <div class="field"><label for="diffuse">Diffuse</label><input type="range" value="100" aria-label="Diffuse slider"><input class="num" id="diffuse" value="1"></div>

          <h3>Edge Styling</h3>
        </div>
        <div class="scrollbar"><button class="arrow arrow-up" aria-label="Scroll up"></button><div class="thumb"><i class="grip"></i></div><button class="arrow arrow-down" aria-label="Scroll down"></button></div>
      </div>
    </section>
  </aside>

  <section class="views">
    <div class="vtabs">
      <button class="vtab vtab-on"><i class="win"></i><span>Layout #1</span><svg class="ic9"><use href="#i-x"/></svg></button>
      <button class="vtab vtab-add" aria-label="New layout"><svg class="ic9" viewBox="0 0 9 9"><path d="M1 5h7M4.500 1.500v7" stroke="#222"/></svg></button>
    </div>
    <div class="panel">
      <div class="vtools">
        <button aria-label="Camera undo"><svg><use href="#m-cam"/></svg></button><button aria-label="Camera redo"><svg><use href="#m-camr"/></svg></button><i class="sep"></i>
        <button>2D</button><button aria-label="Capture"><svg><use href="#m-cap"/></svg></button><i class="sep"></i>
        <button aria-label="Add selection"><svg><use href="#m-add"/></svg></button><button aria-label="Subtract selection"><svg><use href="#m-sub"/></svg></button><button aria-label="Toggle selection"><svg><use href="#m-tog"/></svg></button><i class="sep"></i>
        <button aria-label="Select cells"><svg><use href="#m-cells"/></svg></button><button aria-label="Select points"><svg><use href="#m-pts"/></svg></button><button aria-label="Cells through"><svg><use href="#m-fr"/></svg></button><button aria-label="Points through"><svg><use href="#m-frp"/></svg></button><button aria-label="Polygon cells"><svg><use href="#m-poly"/></svg></button><button aria-label="Polygon points"><svg><use href="#m-polyp"/></svg></button><button aria-label="Select block"><svg><use href="#m-blk"/></svg></button><button aria-label="Interactive cells"><svg><use href="#m-icell"/></svg></button><button aria-label="Interactive points"><svg><use href="#m-ipt"/></svg></button><button aria-label="Hover points"><svg><use href="#m-qp"/></svg></button><button aria-label="Hover cells"><svg><use href="#m-qc"/></svg></button><button aria-label="Clear selection"><svg><use href="#m-trash"/></svg></button>
      </div>
      <div class="render">
        <svg class="scene" role="img" aria-label="Wireframe of active_elements">
          <g transform="translate(-324 -190)" fill="none">
            <g stroke="#c8304c">
              <path d="M545.500 305V943.500H608.500V305M545.500 368.500h63M545.500 432.500h63M545.500 496.500h63M545.500 560.500h63M545.500 623.500h63M545.500 687.500h63M545.500 751.500h63M545.500 815.500h63M545.500 879.500h63"/>
              <path class="diag" d="m545.500 304.500 63 64m-63 0 63 64m-63 0 63 64m-63 0 63 64m-63 0 63 63m-63 0 63 64m-63 0 63 64"/>
              <path class="diag diag-red" d="m545.500 815.500 63-64m-63 128 63 64"/>
              <path class="diag" d="m545.500 815.500 63 64"/>
            </g>
            <path d="M544 367h3v3h-3zM607 367h3v2h-3zM544 431h3v3h-3zM607 431h3v2h-3zM544 495h3v3h-3zM607 495h3v2h-3zM544 559h3v3h-3zM607 559h3v2h-3zM544 622h3v3h-3zM607 622h3v2h-3zM544 686h3v3h-3zM607 686h3v2h-3zM607 750h3v3h-3zM544 814h3v3h-3zM544 878h3v3h-3zM607 878h3v2h-3z" fill="#b83850"/>
            <path stroke="#7884d8" d="m545.500 304.500 63-64"/>
            <path stroke="#5868d0" d="M545.500 304.500V240.500h63V304.500z"/>
            <path d="M544 303h3v3h-3z" fill="#5048a8"/>
            <path d="M697 440h16v281h-16z" fill="url(#coolwarm)"/>
            <path d="M710 439.500h12M710 496.500h12M710 552.500h12M710 608.500h12M710 664.500h12M710 720.500h12" stroke="#000"/>
            <g class="scene-text" fill="#000">
              <text x="728" y="444">1.0e+00</text><text x="727" y="501">0.8</text><text x="727" y="557">0.6</text><text x="727" y="613">0.4</text><text x="727" y="669">0.2</text><text x="727" y="725">0.0e+00</text>
              <g class="scene-name"><text transform="translate(804 642) rotate(-90)">active_elements</text>
              <text x="374" y="948">Y</text><text x="375" y="995">Z</text><text x="422" y="997">X</text></g>
            </g>
            <path d="M371.500 948v45" stroke="#e8e800"/><path d="m372 937 4 9c-1 3-7 3-8 0z" fill="#e0e000"/>
            <path d="M377 996h12" stroke="#111" stroke-width="2"/><path d="M386 996.500h34" stroke="#f01010"/><path d="m419 992 12 4-12 4z" fill="#e00000"/>
            <circle cx="372" cy="996" r="5" fill="#005a00"/>
          </g>
        </svg>
      </div>
    </div>
  </section>
</main>
</body>
</html>
```

FILE: styles.css
```css
* { box-sizing: border-box; }
html, body { margin: 0; }
body {
  min-height: 100vh;
  display: flex;
  flex-direction: column;
  background: #efefef;
  color: #000;
  font: 11px/14px Roboto, "Liberation Sans", sans-serif;
  overflow-x: hidden;
}
button, input, select { font: inherit; color: inherit; margin: 0; }
button { border: 0; padding: 0; background: none; }
svg { display: block; flex: none; }
ul { list-style: none; margin: 0; padding: 0; }
h1, h2, h3 { margin: 0; font-size: 11px; font-weight: normal; }
.defs { position: absolute; }
.g { fill: #a8d592; stroke: #708060; stroke-width: 1.2px; }

/* Title and menus */
.titlebar {
  height: 22px;
  display: flex;
  align-items: center;
  gap: 6px;
  border-bottom: 1px solid #5f6b78;
  background: linear-gradient(90deg, #dcebf8 0, #d2e6f8 130px, #b9dafb 240px, #b9dcfc 70%, #afd2f3);
}
.logo { width: 16px; height: 12px; }
.title { font-size: 12px; }
.menubar {
  height: 21px;
  display: flex;
  align-items: center;
  border-bottom: 1px solid #b4b6c2;
  background: linear-gradient(#fcfdfe 0, #eef0f8 6px, #d5daec 7px, #dfe3f2 100%);
  font-size: 12px;
}
.menu { height: 19px; padding: 1px 6px 0 7px; border: 1px solid transparent; border-radius: 3px; }
.menu-hot { border-color: #9a9eaa; background: linear-gradient(#f4f5fa, #dde1ee); }

/* Toolbars */
.toolrow {
  height: 34px;
  display: flex;
  overflow: hidden;
  border-top: 1px solid #fdfdfd;
  border-bottom: 1px solid #b6b6b6;
}
.toolbar {
  flex: none;
  display: flex;
  align-items: center;
  padding-right: 2px;
  border-right: 1px solid #b0b0b0;
}
.toolbar::before {
  content: "";
  width: 2px;
  height: 24px;
  margin: 0 3px 0 4px;
  background: repeating-linear-gradient(#b4b4b4 0 2px, transparent 2px 4px);
}
.toolbar-last { flex: 1 0 auto; border-right: 0; }
.tool { width: 31px; height: 29px; flex: none; display: grid; place-items: center; }
.tool svg { width: 24px; height: 24px; overflow: visible; }
.tool-on { border: 1px solid #707070; border-radius: 3px; background: #dadada; box-shadow: inset 0 0 2px #888; }
.sep { width: 2px; height: 24px; margin: 0 2px; border-left: 1px solid #c2c2c2; border-right: 1px solid #fff; }
.cam { font: bold 10px "Liberation Sans", sans-serif; fill: #888; }
.time-label { margin: 2px 2px 0 0; }
.time-input { width: 134px; height: 20px; padding: 2px 2px 0; border: 1px solid #a9a9a9; border-radius: 2px; background: #efefef; color: #777; }
.spin { width: 37px; height: 20px; margin: 0 3px 0 1px; display: flex; border: 1px solid #c4c4cc; border-top-color: #aaa; background: #fff; }
.spin-input { flex: 1; min-width: 0; border: 0; padding: 2px 2px 0; background: none; }
.spin-buttons { display: flex; flex-direction: column; gap: 1px; padding: 1px; }
.step { width: 13px; height: 8px; display: grid; place-items: center; border: 1px solid #aaa; background: #eee; }
.step::before { content: ""; border: 3px solid transparent; border-top: 0; border-bottom-color: #4a62b0; }
.step-down::before { border-top: 3px solid #4a62b0; border-bottom: 0; }
.max { padding-top: 2px; }

/* Drop-downs */
.combo {
  height: 20px;
  flex: 1;
  min-width: 0;
  display: flex;
  align-items: center;
  padding: 0 4px 0 2px;
  border: 1px solid #707070;
  border-radius: 2px;
  background: linear-gradient(#f4f4f4 0, #ebebeb 48%, #dcdcdc 50%, #cfcfcf);
}
.combo::after { content: ""; border: 4px solid transparent; border-top-color: #000; border-bottom: 0; }
.combo select { flex: 1; min-width: 0; height: 18px; padding: 2px 1px 0; border: 0; background: none; appearance: none; }
.combo-icon { width: 16px; height: 16px; margin: 0 1px 0 2px; }
.combo-off { border-color: #b8b8b8; background: #f2f2f2; }
.combo-off::after { border-top-color: #a0a0a0; }
.combo-hot { border-color: #3c7fb1; background: linear-gradient(#eaf6fd 0, #d9f0fc 48%, #bee6fd 50%, #a7d9f5); }
.combo-array { flex: none; width: 150px; height: 22px; margin-left: 1px; }
.combo-comp { flex: none; width: 68px; height: 20px; margin-left: 4px; }
.combo-rep { flex: none; width: 150px; margin-left: 1px; }

/* Docks */
.main { flex: 1; display: flex; align-items: flex-start; gap: 4px; }
.docks { width: 316px; flex: none; }
.dock-title {
  height: 20px;
  display: flex;
  align-items: center;
  gap: 7px;
  margin-top: 1px;
  padding: 0 4px;
  border: 1px solid #b4b4b4;
  border-left: 0;
  background: #dadada;
}
.dock-title h2 { flex: 1; padding-top: 2px; }
.dock-btn svg { width: 9px; height: 9px; }
.tree { height: 236px; margin-top: 1px; padding-top: 2px; border: 1px solid #8e8f96; background: #fff; }
.node { height: 22px; display: flex; align-items: center; padding-left: 4px; }
.node-root { padding-left: 35px; }
.node-root .node-name { padding-left: 4px; }
.server { width: 10px; height: 16px; }
.eye { width: 14px; height: 10px; color: #999; }
.eye-on { color: #1c2c4c; }
.branch { width: 10px; height: 22px; margin-left: 22px; border-left: 1px solid #888; background: linear-gradient(#888, #888) 0 11px / 9px 1px no-repeat; }
.branch-end { height: 12px; align-self: flex-start; }
.cube { width: 16px; height: 16px; }
.node-name { padding: 2px 3px 0 1px; border: 1px dotted transparent; }
.node-sel { background: #3399ff; color: #fff; border-color: #d07020; }
.tabs { height: 21px; margin-top: 4px; display: flex; align-items: flex-end; border-bottom: 1px solid #9a9aa0; }
.tab { height: 18px; padding: 0 9px; border: 1px solid #9a9aa0; border-bottom: 0; background: linear-gradient(#f4f4f4, #dcdcdc); }
.tab-on { height: 20px; padding: 0 12px 0 10px; background: #fff; border-right: 0; }
.tabs + .dock .dock-title { margin-top: 1px; }

/* Buttons */
.btn {
  height: 22px;
  flex: 1;
  display: flex;
  align-items: center;
  justify-content: center;
  gap: 5px;
  border: 1px solid #707070;
  border-radius: 3px;
  background: linear-gradient(#f3f3f3 0, #ebebeb 48%, #dddddd 50%, #cfcfcf);
  box-shadow: inset 0 0 0 1px #fafafa;
}
.btn span { padding-top: 2px; }
.btn:disabled { border-color: #b4b4b4; background: #f2f2f2; color: #838383; }
.ic16 { width: 16px; height: 16px; }
.ic14 { width: 14px; height: 14px; }
.ic9 { width: 9px; height: 9px; }
.faded { filter: grayscale(1); opacity: .6; }
.actions { display: flex; gap: 4px; padding: 11px 10px 8px; }
.actions .btn { flex: 73 1 0; }
.actions .btn-help { flex: 65 1 0; }
.search { display: flex; gap: 3px; padding: 0 10px 7px 9px; }
.search input { flex: 1; min-width: 0; height: 20px; padding: 2px 1px 0; border: 1px solid #dcdce4; border-top-color: #aaaab0; background: #fff; }
.search input::placeholder { color: #808080; }
.gear { width: 21px; height: 20px; display: grid; place-items: center; border: 1px solid #2c628b; border-radius: 2px; background: linear-gradient(#c4e2f4, #8cbcdc); }
.gear svg { width: 18px; height: 18px; }

/* Properties list */
.scroll { display: flex; gap: 1px; padding: 0 10px 0 9px; }
.props { flex: 1; min-width: 0; display: flex; flex-direction: column; }
.group { height: 26px; display: flex; align-items: center; gap: 6px; margin-bottom: 12px; padding-right: 1px; }
.group + .field { margin-top: -6px; }
.group-name { height: 26px; flex: 1; min-width: 0; display: flex; align-items: center; gap: 8px; padding: 0 4px 0 10px; border: 1px solid #8a8a92; background: #f0f0f2; font: bold 11px/14px "Open Sans", sans-serif; }
.group-name span { white-space: nowrap; padding-top: 1px; }
.group-name .minus { width: 13px; height: 5px; flex: none; border: 1px solid #1c2c5c; background: #7f9fe0; }
.mini { width: 26px; height: 22px; flex: none; display: grid; place-items: center; border: 1px solid #707070; border-radius: 3px; background: linear-gradient(#f3f3f3 0, #ebebeb 48%, #dddddd 50%, #cfcfcf); box-shadow: inset 0 0 0 1px #fafafa; }
.mini:disabled { border-color: #b4b4b4; background: #f2f2f2; }
.mini-on { border-color: #2c628b; background: linear-gradient(#d5ecf8, #86bee2); box-shadow: none; }
.mini svg { width: 16px; height: 16px; }
.field { height: 20px; display: flex; margin-bottom: 4px; }
.field > label { flex: none; width: 105px; padding-top: 1px; margin-left: -1px; margin-right: 1px; }
.num { flex: 1; min-width: 0; height: 20px; padding: 3px 3px 0; border: 1px solid #dfe0ea; border-top-color: #a9abb2; border-radius: 2px; background: #fff; }
h3 { height: 16px; margin: 3px 0 5px; border-bottom: 1px solid #8f8f8f; font: bold 11px/16px "Open Sans", sans-serif; }
.pair { display: flex; align-items: center; gap: 4px; margin-bottom: 5px; }
.combo-color { flex: none; width: 150px; height: 22px; }
.minis { display: flex; gap: 6px; padding: 0 1px; margin-bottom: 5px; }
.check { height: 20px; display: flex; align-items: center; gap: 4px; margin-bottom: 1px; }
.check input { appearance: none; width: 13px; height: 13px; display: grid; place-items: center; border: 1px solid #8e8f8f; background: #f2f4f6; box-shadow: inset 0 0 0 1px #fff, inset 0 0 0 2px #c4c9d0; }
.check input:checked::before { content: ""; width: 4px; height: 8px; margin-bottom: 2px; border: solid #3a4f90; border-width: 0 2px 2px 0; transform: rotate(38deg); }
input[type="range"] { flex: none; appearance: none; width: 59px; height: 18px; margin: 0 7px 0 0; background: linear-gradient(#a8b0ac 0 1px, #e4e6e6 1px 3px, #fff 3px) 0 8px / 100% 4px no-repeat; }
input[type="range"]::-webkit-slider-thumb { appearance: none; width: 10px; height: 18px; border: 1px solid #707070; border-radius: 2px; background: linear-gradient(#f6f6f6 0 45%, #d4d4d4 50%); box-shadow: inset 0 0 0 1px #fafafa; }
.btn-color { flex: none; height: 20px; justify-content: flex-start; gap: 4px; margin: 1px 1px 5px; padding: 0 4px; }
.swatch { width: 15px; height: 15px; border: 1px solid #555; border-radius: 50%; background: #fff; }
.scrollbar { width: 15px; flex: none; display: flex; flex-direction: column; border: solid #e3e3e6; border-width: 1px 0; background: #f0f0f0; }
.arrow { height: 17px; display: grid; place-items: center; }
.arrow::before { content: ""; border: 4px solid transparent; border-top: 0; border-bottom-color: #444; }
.arrow-down::before { border-top: 4px solid #444; border-bottom: 0; }
.thumb { height: 154px; margin-bottom: auto; display: grid; place-items: center; border: 1px solid #8f8f8f; border-radius: 2px; background: linear-gradient(90deg, #f5f5f5, #e4e4e4 50%, #c6c6c6); }
.grip { width: 6px; height: 8px; background: repeating-linear-gradient(#555 0 1px, #eee 1px 2px); }

/* Views */
.views { flex: 1; min-width: 0; padding-top: 1px; }
.vtabs { height: 20px; display: flex; align-items: flex-end; }
.vtab { height: 18px; width: 28px; display: flex; align-items: center; justify-content: center; gap: 4px; border: 1px solid #9a9aa0; border-bottom: 0; background: linear-gradient(#f4f4f4, #dcdcdc); }
.vtab-on { height: 21px; width: 104px; margin-bottom: -1px; padding: 0 5px 1px 0; gap: 5px; background: #fff; }
.win { width: 9px; height: 8px; border: 1px solid #000; border-top-width: 2px; }
.panel { border: 1px solid #8f9098; border-right: 0; padding: 0 0 2px 1px; background: #fff; }
.vtools { height: 21px; display: flex; align-items: center; padding-bottom: 1px; }
.vtools button { width: 19px; height: 20px; flex: none; display: grid; place-items: center; color: #333; }
.vtools svg { width: 13px; height: 13px; }
.vtools .sep { height: 12px; flex: none; }
.vtab-on + .vtab { border-left: 0; }
.render { border: 2px solid #0000f0; border-right: 0; background: #fff; }
.scene { width: 100%; height: 856px; }
.scene-text { font: 16px Lato, sans-serif; }
.scene-name { font-size: 18px; }
.diag { stroke: #a86878; stroke-width: 1px; }
.diag-red { stroke: #e05068; }
```
